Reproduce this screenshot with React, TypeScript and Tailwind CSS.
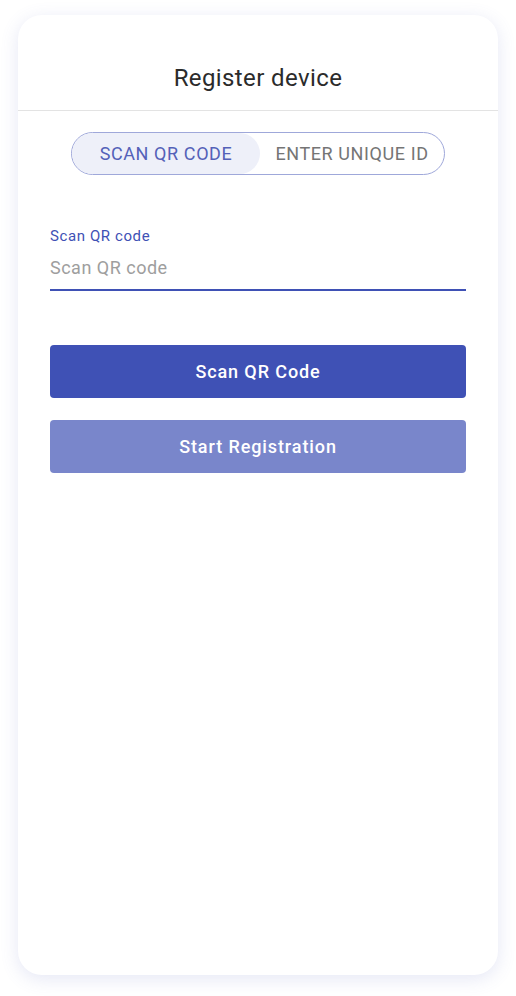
import React, { useState } from 'react';

const App = () => {
    const [mode, setMode] = useState<'qr' | 'id'>('qr');

    return (
        <div className="min-h-screen w-full bg-white pt-[15px] px-[18px] font-['Roboto',sans-serif]">
            {/* Card */}
            <div className="h-[960px] w-[480px] rounded-[24px] bg-white shadow-[0_4px_18px_rgba(92,107,192,0.16)] flex flex-col">
                {/* Header */}
                <div className="h-[96px] flex items-end justify-center pb-[17px] border-b border-[#e3e3e3]">
                    <h1 className="text-[24px] leading-[30px] tracking-[0.4px] text-[#2b2b2b]">Register device</h1>
                </div>

                {/* Toggle */}
                <div className="flex justify-center mt-[21px]">
                    <div className="flex h-[43px] w-[374px] rounded-full border border-[#9fa8da] overflow-hidden">
                        <button
                            onClick={() => setMode('qr')}
                            className={`w-[188px] rounded-full text-[18px] tracking-[0.6px] ${
                                mode === 'qr' ? 'bg-[#eef0f9] text-[#5461b8]' : 'text-[#757575]'
                            }`}
                        >
                            SCAN QR CODE
                        </button>
                        <button
                            onClick={() => setMode('id')}
                            className={`flex-1 rounded-full text-[18px] tracking-[0.6px] ${
                                mode === 'id' ? 'bg-[#eef0f9] text-[#5461b8]' : 'text-[#757575]'
                            }`}
                        >
                            ENTER UNIQUE ID
                        </button>
                    </div>
                </div>

                {/* Form */}
                <div className="px-[32px] mt-[52px]">
                    <label className="block text-[15px] leading-[18px] tracking-[0.6px] text-[#4051b5]">Scan QR code</label>
                    <input
                        placeholder="Scan QR code"
                        className="mt-[4px] w-full h-[42px] pb-[4px] text-[18px] tracking-[0.5px] text-[#333] placeholder:text-[#9e9e9e] outline-none border-b-2 border-[#3f51b5] bg-transparent"
                    />

                    <div className="mt-[54px] flex flex-col gap-[22px]">
                        <button className="h-[53px] w-full rounded-[4px] bg-[#3f51b5] text-white text-[18px] font-medium tracking-[0.9px]">
                            Scan QR Code
                        </button>
                        <button className="h-[53px] w-full rounded-[4px] bg-[#7986cb] text-white text-[18px] font-medium tracking-[0.9px]">
                            Start Registration
                        </button>
                    </div>
                </div>
            </div>
        </div>
    );
};

export default App;
